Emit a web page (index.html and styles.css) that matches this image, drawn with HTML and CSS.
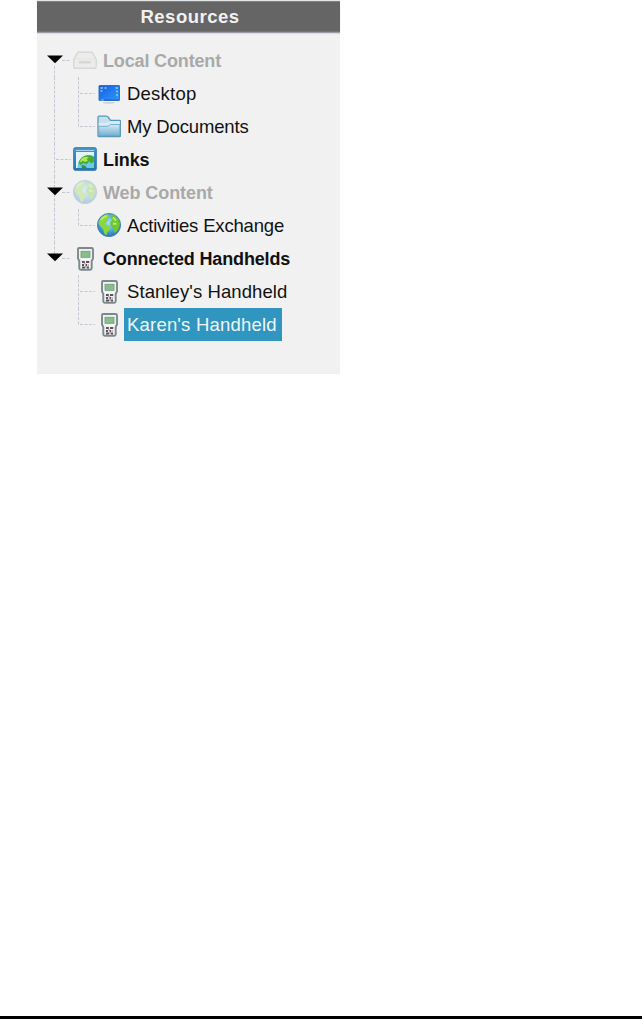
FILE: index.html
```html
<!DOCTYPE html>
<html lang="en">
<head>
<meta charset="utf-8">
<title>Resources</title>
<link rel="stylesheet" href="styles.css">
</head>
<body>
<svg class="defs" width="0" height="0" aria-hidden="true">
  <defs>
    <linearGradient id="blue" x1="0" y1="0" x2="1" y2="1"><stop offset="0" stop-color="#1759d6"/><stop offset=".5" stop-color="#237cf0"/><stop offset="1" stop-color="#2f96f6"/></linearGradient>
    <linearGradient id="folderFill" x1="0" y1="0" x2="0" y2="1"><stop offset="0" stop-color="#d5eaf4"/><stop offset="1" stop-color="#70afd0"/></linearGradient>
    <radialGradient id="sea" cx=".5" cy=".4" r=".6"><stop offset="0" stop-color="#a5e2f7"/><stop offset=".6" stop-color="#4ba8dc"/><stop offset="1" stop-color="#2b72ad"/></radialGradient>
    <linearGradient id="frame" x1="0" y1="0" x2="0" y2="1"><stop offset="0" stop-color="#4499cb"/><stop offset="1" stop-color="#2a74a6"/></linearGradient>
    <symbol id="drive" viewBox="0 0 24 24">
      <path d="M5 3.3H19L23.2 10V17.8Q23.2 19.3 21.7 19.3H2.3Q.8 19.3 .8 17.8V10Z" fill="#ececea" stroke="#d7d7d5" stroke-width="1.4" stroke-linejoin="round"/>
      <path d="M2 10H22" stroke="#e2e2e0" stroke-width="1"/>
      <path d="M6 13.2H18" stroke="#d8d6ce" stroke-width="2.4" stroke-dasharray="3.5 .3"/>
    </symbol>
    <symbol id="screen" viewBox="0 0 24 24">
      <ellipse cx="12" cy="20.7" rx="6" ry="1" fill="#d2d2d2"/>
      <rect x="2" y="3.5" width="20.5" height="15" rx=".5" fill="url(#blue)" stroke="#2d72c4"/>
      <path d="M3.5 6H6M7.5 6H9.5M3.5 9H5.5M18.5 6H21M19 9.5H21M19 13H21" stroke="#94ccff" stroke-width="1.6"/>
      <path d="M2.5 18H22" stroke="#2b62bf" stroke-width="1"/>
      <path d="M3.5 18H7" stroke="#7ac3ff" stroke-width="1"/>
    </symbol>
    <symbol id="folder" viewBox="0 0 24 24">
      <path d="M1 20.7V2.2Q1 1.2 2 1.2H9.5Q10.5 1.2 11.5 2.5L13.5 5.3H22.5Q23.5 5.3 23.5 6.3V20.7Q23.5 21.7 22.5 21.7H2Q1 21.7 1 20.7Z" fill="#c5e0ed" stroke="#5698bc" stroke-width="1.3"/>
      <path d="M2 8H9Q11 8 12.2 6.5H22.7V20.6H1.8V8Z" fill="#d9edf6"/>
      <path d="M1.8 11.3H10Q12 11.3 13.2 9.5H22.8V21H1.8Z" fill="url(#folderFill)" stroke="#659fbe" stroke-width=".8"/>
    </symbol>
    <symbol id="globe" viewBox="0 0 24 24">
      <circle cx="12" cy="12" r="11.6" fill="url(#sea)" stroke="#3c7caa" stroke-width=".8"/>
      <path d="M1.7 8.5Q4 3 10 1.2L12.3 3 10 5 11.5 7 8.8 9.5 8 11.3 11 12.5 13.5 14.3 12.5 17 10.3 19.3 9.5 22.3 7.5 21 6.5 16.5 3.2 13 1.5 11Z" fill="#8cd63a"/>
      <path d="M13.5 1.5L17 2 21 5.5 23 10.5 22 15 19.3 19.3 17 19.5 16.5 15.5 13.7 13 12.8 9.5 15.3 7.2 14 5Z" fill="#6fc636"/>
      <path d="M4 7Q6 3.7 10 3M16 4.5L19 7.5M16 10.5L19.5 11" fill="none" stroke="#bdea58" stroke-width="2"/>
    </symbol>
    <symbol id="link" viewBox="0 0 24 24">
      <rect x=".7" y=".7" width="22.6" height="22.6" rx="1.5" fill="url(#frame)" stroke="#3379a9"/>
      <path d="M3 3.5H21" stroke="#a8d3e8" stroke-width="1"/>
      <rect x="3" y="5" width="18" height="16" fill="#e3f3fa"/>
      <path d="M4.5 21Q4.5 11.5 12 8.7Q17 7 21 9.5V21Z" fill="#6ccbe6"/>
      <path d="M5.5 16Q7 10 13 8.5Q18 7.5 21 10V14.5L18.5 16.5 16 14.5 13.5 17.5 10.5 16 7.5 18Z" fill="#45ad32"/>
      <path d="M7 14.5Q8 10.5 13 9.7L16 10.5 13.5 12 15 13.5 12 15 9.5 13.5 8 15.5Z" fill="#b4e84c"/>
      <path d="M8.5 18L12 18.5 14 21H9Z" fill="#36933b"/>
    </symbol>
    <symbol id="handheld" viewBox="0 0 24 24">
      <path d="M6 1H18.5Q20 1 20 2.5V11.5L18.7 14V21.3Q18.7 22.8 17.2 22.8H7.8Q6.3 22.8 6.3 21.3V14L5 11.5V2.5Q5 1 6 1Z" fill="#eef1ef" stroke="#7d888c" stroke-width="1.9"/>
      <rect x="8" y="4.3" width="9" height="6" fill="#87bf88" stroke="#76987d" stroke-width=".8"/>
      <path d="M8 12.4H17" stroke="#fff" stroke-width="1.5"/>
      <path d="M9 15H11.8M13 15H16.2M9 18H11M12.5 18H14M9 20.5H12M14 20.5H16" stroke="#5c515a" stroke-width="1.8"/>
      <path d="M11 16.7H12.5M14.5 18H16M12 20H14" stroke="#b9a0ac" stroke-width="1.3"/>
    </symbol>
    <symbol id="arrow" viewBox="0 0 16 9"><path d="M0 .5H16L8 8.3Z" fill="#000"/></symbol>
  </defs>
</svg>
<section class="panel">
  <h1 class="title"><span>Resources</span></h1>
  <ul class="tree">
    <li class="row muted">
      <svg class="gutter" width="26" height="33"><path class="line" d="M7.5 22V33M15 16.5H24"/><use href="#arrow" x="0" y="11" width="16" height="9"/></svg>
      <svg class="icon" width="24" height="24"><use href="#drive"/></svg><span class="label local">Local Content</span>
    </li>
    <li class="row child">
      <svg class="gutter" width="50" height="33"><path class="line" d="M7.5 0V33M31.5 0V33M33 16.5H48"/></svg>
      <svg class="icon" width="24" height="24"><use href="#screen"/></svg><span class="label desktop">Desktop</span>
    </li>
    <li class="row child">
      <svg class="gutter" width="50" height="33"><path class="line" d="M7.5 0V33M31.5 0V17M33 16.5H48"/></svg>
      <svg class="icon" width="24" height="24"><use href="#folder"/></svg><span class="label documents">My Documents</span>
    </li>
    <li class="row">
      <svg class="gutter" width="26" height="33"><path class="line" d="M7.5 0V33M9 16.5H24"/></svg>
      <svg class="icon" width="24" height="24"><use href="#link" y="-1"/></svg><span class="label links">Links</span>
    </li>
    <li class="row muted">
      <svg class="gutter" width="26" height="33"><path class="line" d="M7.5 0V33M15 16.5H24"/><use href="#arrow" x="0" y="11" width="16" height="9"/></svg>
      <svg class="icon faded" width="24" height="24"><use href="#globe" y="-1"/></svg><span class="label web">Web Content</span>
    </li>
    <li class="row child">
      <svg class="gutter" width="50" height="33"><path class="line" d="M7.5 0V33M31.5 0V17M33 16.5H48"/></svg>
      <svg class="icon" width="24" height="24"><use href="#globe" y="-1"/></svg><span class="label activities">Activities Exchange</span>
    </li>
    <li class="row">
      <svg class="gutter" width="26" height="33"><path class="line" d="M7.5 0V12M15 16.5H24"/><use href="#arrow" x="0" y="11" width="16" height="9"/></svg>
      <svg class="icon" width="24" height="24"><use href="#handheld"/></svg><span class="label connected">Connected Handhelds</span>
    </li>
    <li class="row child">
      <svg class="gutter" width="50" height="33"><path class="line" d="M31.5 0V33M33 16.5H48"/></svg>
      <svg class="icon" width="24" height="24"><use href="#handheld"/></svg><span class="label stanley">Stanley's Handheld</span>
    </li>
    <li class="row child">
      <svg class="gutter" width="50" height="33"><path class="line" d="M31.5 0V17M33 16.5H48"/></svg>
      <svg class="icon" width="24" height="24"><use href="#handheld"/></svg><span class="label karen selected">Karen's Handheld</span>
    </li>
  </ul>
</section>
<footer class="rule"></footer>
</body>
</html>
```
FILE: styles.css
```css
* { box-sizing: border-box; }
html, body { height: 100%; }
body {
  margin: 0;
  background: #fff;
  font: 18px/33px "Liberation Sans", Arial, sans-serif;
  color: #111;
  display: flex;
  flex-direction: column;
  overflow: hidden;
}
.defs { display: block; flex: none; }
.panel {
  width: 303px;
  height: 374px;
  margin-left: 37px;
  background: #f1f1f1;
}
.title {
  margin: 0;
  height: 33px;
  padding: 0 0 0 3px;
  background: linear-gradient(#e4e6e8 0 1px, #7c8087 1px 2px, #656565 2px 31px, #73757e 31px 32px, #9b9ba5 32px 33px);
  box-shadow: 0 1px 1px #dedee1;
  color: #f1f1f1;
  font-size: 18.5px;
  line-height: 33px;
  letter-spacing: .5px;
  text-align: center;
}
.tree { list-style: none; margin: 0; padding: 11px 0 0 10px; }
.row { display: flex; align-items: center; height: 33px; font-weight: bold; }
.child { font-size: 18.5px; font-weight: normal; }
.gutter, .icon { display: block; flex: none; overflow: visible; }
.line { fill: none; stroke: #c4c6d0; stroke-width: 1; stroke-dasharray: 3 1.5; }
.label { height: 33px; padding: 1px 0 0 3px; margin-left: 3px; white-space: nowrap; }
.child .label { padding-top: 0; }
.muted { color: #a9a9a9; }
.faded { opacity: .3; }
.local { letter-spacing: -.15px; }
.desktop { letter-spacing: .22px; }
.documents { letter-spacing: -.15px; }
.links { letter-spacing: -.1px; }
.web { letter-spacing: -.08px; }
.activities { letter-spacing: -.18px; }
.connected { letter-spacing: -.15px; }
.stanley { letter-spacing: .09px; }
.karen { letter-spacing: .2px; }
.selected { width: 158px; background: #3095bf; color: #eef7fb; }
.rule { flex: none; height: 3px; margin-top: auto; background: #000; }
```
